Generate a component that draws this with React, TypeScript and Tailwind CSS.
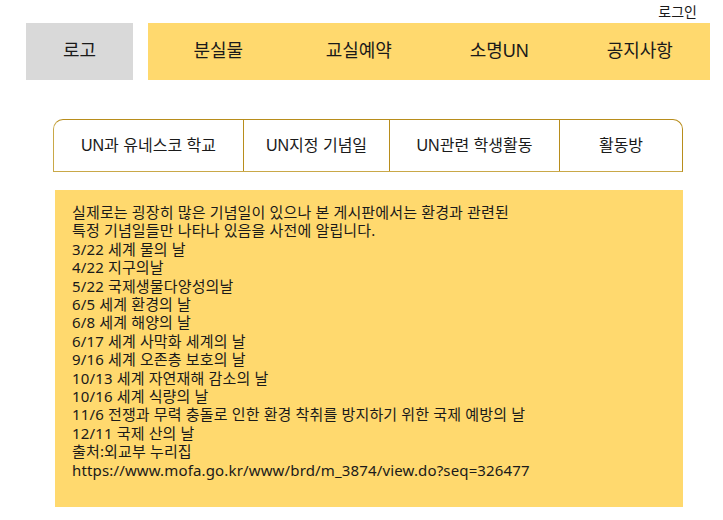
const NAV = ["분실물", "교실예약", "소명UN", "공지사항"];

const TABS = [
  { label: "UN과 유네스코 학교", w: "w-[190px]" },
  { label: "UN지정 기념일", w: "w-[146px]" },
  { label: "UN관련 학생활동", w: "w-[170px]" },
  { label: "활동방", w: "flex-1" },
];

const LINES = [
  "실제로는 굉장히 많은 기념일이 있으나 본 게시판에서는 환경과 관련된",
  "특정 기념일들만 나타나 있음을 사전에 알립니다.",
  "3/22 세계 물의 날",
  "4/22 지구의날",
  "5/22 국제생물다양성의날",
  "6/5 세계 환경의 날",
  "6/8 세계 해양의 날",
  "6/17 세계 사막화 세계의 날",
  "9/16 세계 오존층 보호의 날",
  "10/13 세계 자연재해 감소의 날",
  "10/16 세계 식량의 날",
  "11/6 전쟁과 무력 충돌로 인한 환경 착취를 방지하기 위한 국제 예방의 날",
  "12/11 국제 산의 날",
  "출처:외교부 누리집",
  "https://www.mofa.go.kr/www/brd/m_3874/view.do?seq=326477",
];

export default function App() {
  return (
    <main
      className="w-[723px] h-[520px] bg-white text-[#1a1a1a] overflow-hidden"
      style={{ fontFamily: '"Liberation Sans", "Noto Sans CJK KR", sans-serif' }}
    >
      {/* top login link */}
      <div className="flex justify-end pr-[26px] pt-[3px] h-[23px]">
        <span className="text-[14px] leading-[18px]">로그인</span>
      </div>

      {/* header */}
      <header className="flex gap-[15px] pl-[26px] pr-[13px] h-[57px]">
        <div className="w-[107px] bg-[#d9d9d9] flex items-center justify-center text-[18px]">
          로고
        </div>
        <nav className="flex-1 bg-[#ffd96e] grid grid-cols-4 items-center text-[18px]">
          {NAV.map((n) => (
            <div key={n} className="text-center">
              {n}
            </div>
          ))}
        </nav>
      </header>

      {/* tabs */}
      <div className="ml-[53px] mt-[39px] w-[630px] h-[53px] flex rounded-t-[10px] border border-[#c9a848] border-t-[#b88d1c] border-r-[#b88d1c]">
        {TABS.map((t, i) => (
          <div
            key={t.label}
            className={`${t.w} flex items-center justify-center text-[16px] ${
              i < TABS.length - 1 ? "border-r border-[#b88d1c]" : ""
            }`}
          >
            {t.label}
          </div>
        ))}
      </div>

      {/* content */}
      <section
        className="ml-[55px] mt-[18px] w-[628px] h-[317px] bg-[#ffd96e] pl-[17px] pt-[13px] text-[15px] leading-[18.4px] tracking-[0.15px]"
        style={{ fontFamily: '"Noto Sans", "Noto Sans CJK KR", sans-serif' }}
      >
        {LINES.map((l) => (
          <p key={l}>{l}</p>
        ))}
      </section>
    </main>
  );
}
